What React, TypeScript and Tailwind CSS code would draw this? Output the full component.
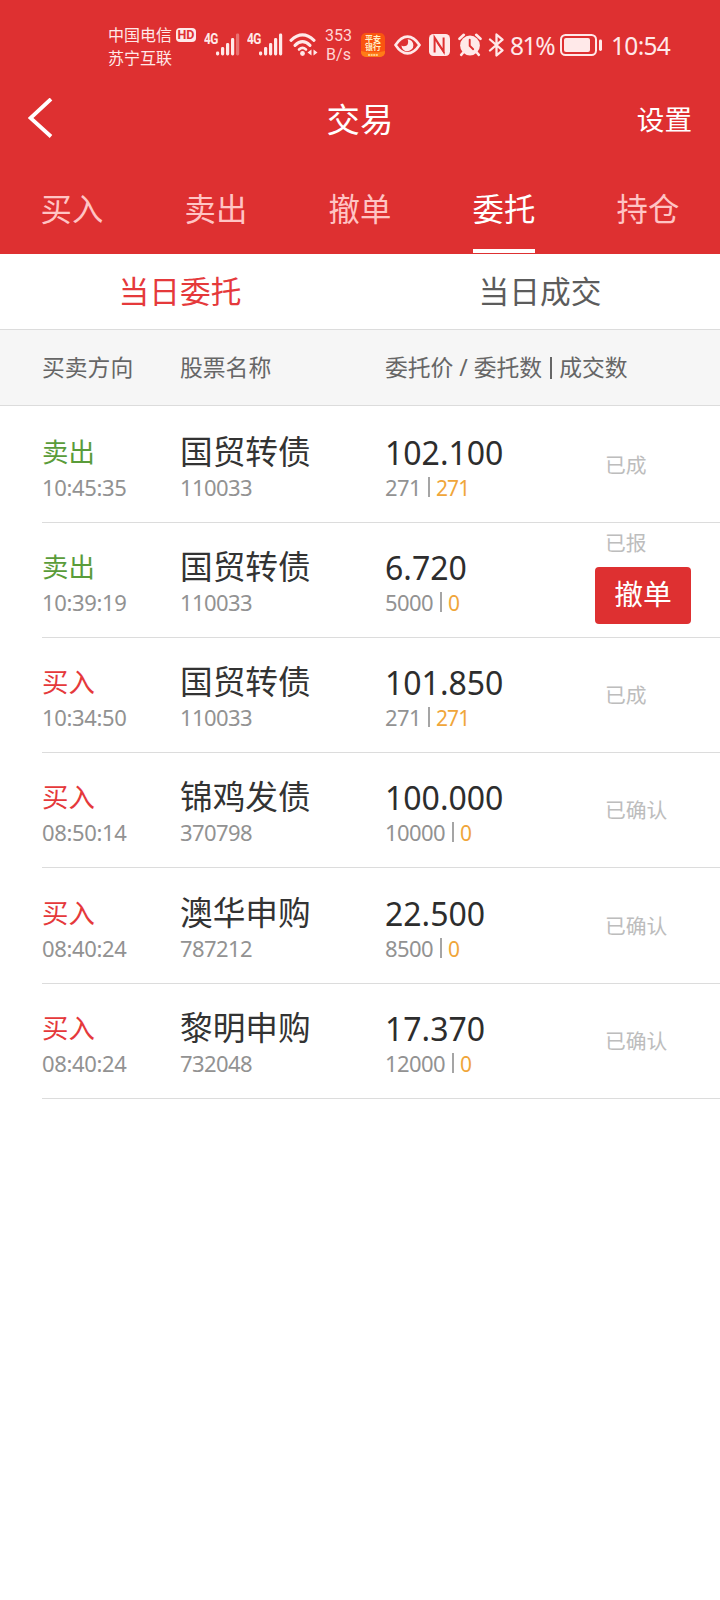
import React from 'react';

type Order = {
  side: '买入' | '卖出';
  time: string;
  name: string;
  code: string;
  price: string;
  amount: string;
  filled: string;
  status: string;
  cancellable?: boolean;
  size: string;
};

const orders: Order[] = [
  { side: '卖出', time: '10:45:35', name: '国贸转债', code: '110033', price: '102.100', amount: '271', filled: '271', status: '已成', size: 'h-[117px]' },
  { side: '卖出', time: '10:39:19', name: '国贸转债', code: '110033', price: '6.720', amount: '5000', filled: '0', status: '已报', cancellable: true, size: 'h-[115px]' },
  { side: '买入', time: '10:34:50', name: '国贸转债', code: '110033', price: '101.850', amount: '271', filled: '271', status: '已成', size: 'h-[115px]' },
  { side: '买入', time: '08:50:14', name: '锦鸡发债', code: '370798', price: '100.000', amount: '10000', filled: '0', status: '已确认', size: 'h-[115px]' },
  { side: '买入', time: '08:40:24', name: '澳华申购', code: '787212', price: '22.500', amount: '8500', filled: '0', status: '已确认', size: 'h-[116px]' },
  { side: '买入', time: '08:40:24', name: '黎明申购', code: '732048', price: '17.370', amount: '12000', filled: '0', status: '已确认', size: 'h-[115px]' },
];

function Signal({ weak }: { weak?: boolean }) {
  return (
    <div className="flex h-[24px] w-[36px] shrink-0 items-start">
      <span className="w-[12px] origin-left scale-x-[0.85] font-['Roboto'] text-[14px] leading-[13px] font-bold tracking-[-0.6px]">4G</span>
      <svg className="h-[24px] w-[24px] shrink-0" viewBox="0 0 24 24" fill="currentColor">
        <rect x="0" y="18.5" width="3.2" height="4" rx="1.4" />
        <rect x="5" y="14" width="3.2" height="8.5" rx="1.4" />
        <rect x="10" y="10" width="3.2" height="12.5" rx="1.4" />
        <rect x="15" y="5" width="3.2" height="17.5" rx="1.4" />
        <rect x="20" y="0.5" width="3.2" height="22" rx="1.4" opacity={weak ? 0.35 : 1} />
      </svg>
    </div>
  );
}

function StatusBar() {
  return (
    <div className="flex h-[80px] items-start pl-[108px] text-[#ffe9e9]">
      <div className="mt-[24px] w-[66px] shrink-0 text-[16px] leading-[22.5px] whitespace-nowrap">
        <div>中国电信</div>
        <div>苏宁互联</div>
      </div>
      <div className="mt-[28px] ml-[2px] flex h-[14px] w-[20px] shrink-0 items-center justify-center rounded-[4px] bg-[#ffe9e9] font-['Roboto'] text-[12.5px] leading-[14px] font-bold text-[#de3031]">HD</div>
      <div className="mt-[33px] ml-[8px] flex">
        <Signal weak />
      </div>
      <div className="mt-[33px] ml-[7px] flex">
        <Signal />
      </div>
      <svg className="mt-[33px] ml-[6px] h-[24px] w-[29px] shrink-0" viewBox="0 0 29 24" fill="none" stroke="currentColor" strokeWidth="3.1" strokeLinecap="round">
        <path d="M2 7.3Q13.5 -3.5 25 7.3" />
        <path d="M6 12.3Q13.5 5 21 12.3" />
        <path d="M10 16.5Q13.5 13.4 17 16.5" strokeWidth="2.6" />
        <circle cx="13.5" cy="20.5" r="2.4" fill="currentColor" stroke="none" />
        <path d="M22.5 16.5v6l-4-3zM24.5 16.5v6l4-3z" fill="currentColor" stroke="none" />
      </svg>
      <div className="mt-[26px] ml-[4.5px] w-[32px] shrink-0 text-center font-['Roboto'] text-[16px] leading-[19px] text-[#ffd5d5]">
        <div>353</div>
        <div>B/s</div>
      </div>
      <div className="mt-[33px] ml-[6.5px] flex h-[24px] w-[24px] shrink-0 flex-col items-center overflow-hidden rounded-[5px] bg-[#fa5510] pt-[2px] font-bold text-[#fff0c8]">
        <span className="text-[8px] leading-[8px]">平安</span>
        <span className="text-[8px] leading-[8px]">银行</span>
        <svg className="h-[6px] w-[24px] shrink-0" viewBox="0 0 24 6">
          <path d="M0 0Q12 3 24 0V6H0Z" fill="#ff7c17" />
          <path d="M7 4h10" stroke="#ffe3b0" strokeWidth="1.6" strokeDasharray="2 .6" />
        </svg>
      </div>
      <svg className="mt-[35px] ml-[9px] h-[20px] w-[27px] shrink-0" viewBox="0 0 27 20" fill="none" stroke="currentColor" strokeWidth="2.6">
        <path d="M1.5 10Q7 1.6 13.5 1.6T25.5 10Q20 18.4 13.5 18.4T1.5 10Z" />
        <path d="M13.6 4.2a6 6 0 1 1-6.2 6.4c2 1.2 5.6.6 6.4-1.6.7-2 .2-3.8-.2-4.8Z" fill="currentColor" stroke="none" />
      </svg>
      <svg className="mt-[34px] ml-[8px] h-[22px] w-[21px] shrink-0" viewBox="0 0 21 22">
        <rect width="21" height="22" rx="4.5" fill="currentColor" />
        <path d="M5.6 18.6V3.6L14.6 17.6V3.4" fill="none" stroke="#de3031" strokeWidth="2" />
        <path d="M8 8.5L15.4 19" fill="none" stroke="#de3031" strokeWidth="1.2" />
      </svg>
      <svg className="mt-[33px] ml-[8px] h-[24px] w-[24px] shrink-0" viewBox="0 0 24 24" fill="none">
        <circle cx="12" cy="12.5" r="9.9" fill="currentColor" />
        <path d="M1.5 5.8L5.8 1.8M22.5 5.8L18.2 1.8M5.2 19.5L3.2 21.8M18.8 19.5L20.8 21.8" stroke="currentColor" strokeWidth="2.6" strokeLinecap="round" />
        <path d="M11.7 6.8V12.8L15.2 16.2" stroke="#de3031" strokeWidth="1.9" strokeLinecap="round" />
      </svg>
      <svg className="mt-[33px] ml-[6px] h-[24px] w-[17px] shrink-0" viewBox="0 0 17 24" fill="none" stroke="currentColor" strokeWidth="2.3" strokeLinejoin="round" strokeLinecap="round">
        <path d="M2 6.5L14.5 17.3L8.5 22.5V1.5L14.5 6.7L2 17.5" />
      </svg>
      <div className="mt-[32px] ml-[5px] w-[46px] shrink-0 text-[24.5px] leading-[27px] tracking-[-1.4px]">81%</div>
      <svg className="mt-[34px] ml-[4px] h-[22px] w-[42px] shrink-0" viewBox="0 0 42 22" fill="currentColor">
        <rect x="1" y="1" width="35" height="20" rx="4.5" fill="none" stroke="currentColor" strokeWidth="2" />
        <rect x="4" y="4" width="26" height="14" rx="2" />
        <rect x="39" y="5.5" width="3" height="11.5" rx="1.4" />
      </svg>
      <div className="mt-[32px] ml-[9px] text-[24.5px] leading-[27px] tracking-[-0.7px]">10:54</div>
    </div>
  );
}

function OrderRow({ order }: { order: Order }) {
  const sideColor = order.side === '买入' ? 'text-[#e5393b]' : 'text-[#5a9c3a]';
  return (
    <div className={`ml-[42px] flex items-end border-b border-[#dcdcdc] whitespace-nowrap ${order.size}`}>
      <div className="w-[138px] shrink-0 pb-[21px]">
        <div className={`text-[26.4px] leading-[40px] ${sideColor}`}>{order.side}</div>
        <div className="mt-[1px] text-[22px] leading-[28px] tracking-[-0.35px] text-[#929292]">{order.time}</div>
      </div>
      <div className="w-[205px] shrink-0 pb-[21px]">
        <div className="text-[32.7px] leading-[40px] text-[#333]">{order.name}</div>
        <div className="mt-[1px] text-[22px] leading-[28px] tracking-[-0.6px] text-[#929292]">{order.code}</div>
      </div>
      <div className="w-[210px] shrink-0 pb-[21px]">
        <div className="text-[32px] leading-[40px] text-[#2d2d2d]">{order.price}</div>
        <div className="flex h-[28px] items-center text-[22px] leading-[28px] tracking-[-0.6px] text-[#929292]">
          <span>{order.amount}</span>
          <span className="ml-[7px] h-[20px] w-[2px] bg-[#a5a5a5]" />
          <span className="ml-[6px] pt-[2px] text-[21px] tracking-[-0.9px] text-[#f0a63a]">{order.filled}</span>
        </div>
      </div>
      <div className="flex h-[114px] flex-col items-start">
        {order.cancellable ? (
          <>
            <div className="mt-[7px] ml-[10px] text-[20.8px] leading-[26px] text-[#bdbdbd]">{order.status}</div>
            <button className="mt-[11px] h-[57px] w-[96px] rounded-[4px] bg-[#de3031] pb-[3px] text-[28.8px] leading-[54px] text-white">撤单</button>
          </>
        ) : (
          <div className="mt-[44px] ml-[10px] text-[20.8px] leading-[26px] text-[#bdbdbd]">{order.status}</div>
        )}
      </div>
    </div>
  );
}

export default function App() {
  return (
    <div className="flex h-[1600px] w-[720px] flex-col overflow-hidden bg-white font-['Noto_Sans','Noto_Sans_CJK_SC',sans-serif]">
      <header className="h-[254px] shrink-0 bg-[#de3031] text-white">
        <StatusBar />
        <div className="flex h-[80px] items-center px-[28px]">
          <div className="flex flex-1 items-center">
            <svg className="mb-[4px] h-[40px] w-[25px]" viewBox="0 0 25 40" fill="none" stroke="currentColor" strokeWidth="3.8">
              <path d="M23 1L2.5 20L23 38.5" />
            </svg>
          </div>
          <h1 className="pb-[2px] text-[33.4px] leading-[40px]">交易</h1>
          <div className="flex-1 pb-[2px] text-right text-[27.6px] leading-[40px]">设置</div>
        </div>
        <nav className="flex h-[94px] text-[31.4px] leading-[40px] whitespace-nowrap text-[#ffc4c4]">
          {['买入', '卖出', '撤单', '委托', '持仓'].map((tab) => (
            <div key={tab} className="flex flex-1 justify-center">
              <div
                className={
                  tab === '委托'
                    ? 'flex h-[93px] w-[62px] justify-center border-b-4 border-white pt-[29px] text-white'
                    : 'flex h-[93px] w-[62px] justify-center pt-[29px]'
                }
              >
                {tab}
              </div>
            </div>
          ))}
        </nav>
      </header>

      <div className="flex h-[75px] shrink-0 text-center text-[30.7px] leading-[75px]">
        <div className="flex-1 text-[#e5393b]">当日委托</div>
        <div className="flex-1 text-[#5c5c5c]">当日成交</div>
      </div>

      <div className="flex h-[77px] shrink-0 border-y border-[#dcdcdc] bg-[#f6f6f6] pl-[42px] text-[22.8px] leading-[75px] whitespace-nowrap text-[#666]">
        <div className="w-[138px]">买卖方向</div>
        <div className="w-[205px]">股票名称</div>
        <div className="flex items-center">
          <span>委托价 / 委托数</span>
          <span className="mr-[7px] ml-[8px] h-[22px] w-[2px] bg-[#666]" />
          <span>成交数</span>
        </div>
      </div>

      <main>
        {orders.map((order, i) => (
          <OrderRow key={i} order={order} />
        ))}
      </main>
    </div>
  );
}
